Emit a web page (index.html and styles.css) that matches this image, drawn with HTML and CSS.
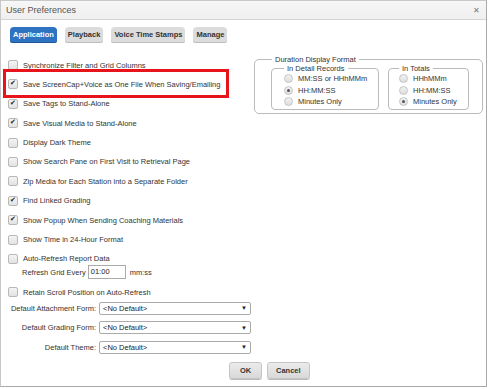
FILE: index.html
```html
<!DOCTYPE html>
<html lang="en">
<head>
    <meta charset="UTF-8" />
    <title>User Preferences</title>
    <link rel="stylesheet" href="styles.css">
</head>
<body>
<div class="dialog">
    <div class="titlebar">
        <span class="title">User Preferences</span>
        <span class="close">&#x2715;</span>
    </div>
    <div class="content">
        <div class="tabs">
            <span class="tab active">Application</span>
            <span class="tab">Playback</span>
            <span class="tab">Voice Time Stamps</span>
            <span class="tab">Manage</span>
        </div>

        <div class="columns">
            <div class="options">
                <div class="row"><span class="check"></span>Synchronize Filter and Grid Columns</div>
                <div class="row marked"><span class="check on"></span>Save ScreenCap+Voice as One File When Saving/Emailing</div>
                <div class="row"><span class="check on"></span>Save Tags to Stand-Alone</div>
                <div class="row"><span class="check on"></span>Save Visual Media to Stand-Alone</div>
                <div class="row"><span class="check"></span>Display Dark Theme</div>
                <div class="row"><span class="check"></span>Show Search Pane on First Visit to Retrieval Page</div>
                <div class="row"><span class="check"></span>Zip Media for Each Station into a Separate Folder</div>
                <div class="row"><span class="check on"></span>Find Linked Grading</div>
                <div class="row"><span class="check on"></span>Show Popup When Sending Coaching Materials</div>
                <div class="row"><span class="check"></span>Show Time in 24-Hour Format</div>
                <div class="row"><span class="check"></span>Auto-Refresh Report Data</div>
                <div class="row sub">Refresh Grid Every <span class="textbox">01:00</span> mm:ss</div>
                <div class="row"><span class="check"></span>Retain Scroll Position on Auto-Refresh</div>

                <div class="fields">
                    <div class="field"><label>Default Attachment Form:</label><span class="select">&lt;No Default&gt;<i>&#x25BC;</i></span></div>
                    <div class="field"><label>Default Grading Form:</label><span class="select">&lt;No Default&gt;<i>&#x25BC;</i></span></div>
                    <div class="field"><label>Default Theme:</label><span class="select">&lt;No Default&gt;<i>&#x25BC;</i></span></div>
                </div>
            </div>

            <fieldset class="group">
                <legend>Duration Display Format</legend>
                <fieldset class="subgroup detail">
                    <legend>In Detail Records</legend>
                    <div class="radio"><span class="dot"></span>MM:SS or HHhMMm</div>
                    <div class="radio"><span class="dot on"></span>HH:MM:SS</div>
                    <div class="radio"><span class="dot"></span>Minutes Only</div>
                </fieldset>
                <fieldset class="subgroup totals">
                    <legend>In Totals</legend>
                    <div class="radio"><span class="dot"></span>HHhMMm</div>
                    <div class="radio"><span class="dot"></span>HH:MM:SS</div>
                    <div class="radio"><span class="dot on"></span>Minutes Only</div>
                </fieldset>
            </fieldset>
        </div>

        <div class="buttons">
            <button class="btn ok">OK</button>
            <button class="btn">Cancel</button>
        </div>
    </div>
</div>
</body>
</html>
```

FILE: styles.css
```css
body {
    margin: 0;
    background: #fff;
    font-family: 'Liberation Sans', Arial, sans-serif;
    font-size: 7.5px;
    color: #333;
}
.dialog {
    width: 485px;
    height: 385px;
    border: 1px solid #a9a9a9;
    border-top-color: #c8c8c8;
    border-left-color: #c8c8c8;
    display: flex;
    flex-direction: column;
}
.titlebar {
    height: 18px;
    display: flex;
    align-items: center;
    justify-content: space-between;
    padding: 0 6px 0 5px;
    background: linear-gradient(#f7f7f7, #efefef);
    border-bottom: 1px solid #d4d4d4;
}
.title {
    font-size: 9px;
    color: #555;
}
.close {
    font-size: 8px;
    color: #777;
}
.content {
    flex: 1;
    padding: 7px 0 0 7px;
    display: flex;
    flex-direction: column;
}
.tabs {
    display: flex;
    gap: 8px;
    padding-left: 2px;
    margin-bottom: 17px;
}
.tab {
    height: 15px;
    line-height: 15px;
    padding: 0 3px;
    font-weight: 700;
    background: #dcdcdc;
    color: #333;
    border-radius: 4px 4px 2px 2px;
    box-shadow: 0 1px 0 #bdbdbd;
}
.tab.active {
    background: #2e72c2;
    color: #fff;
    box-shadow: 0 1px 0 #1f5796;
}
.columns {
    display: flex;
    align-items: flex-start;
}
.options {
    width: 246px;
    flex: none;
    display: flex;
    flex-direction: column;
}
.row {
    height: 12px;
    display: flex;
    align-items: center;
    margin-bottom: 7.4px;
    white-space: nowrap;
}
.row.marked {
    position: relative;
}
.row.marked::after {
    content: '';
    position: absolute;
    left: -5px;
    top: -9px;
    width: 220px;
    height: 23px;
    border: 3px solid #e8141c;
}
.row.sub {
    margin-top: -7px;
    margin-bottom: 7px;
    padding-left: 14px;
    height: 14px;
}
.check {
    width: 8px;
    height: 8px;
    border: 1px solid #b8b8b8;
    border-radius: 2px;
    background: linear-gradient(#f4f4f4, #e2e2e2);
    margin-right: 5px;
    position: relative;
    flex: none;
}
.check.on::after {
    content: '\2714';
    position: absolute;
    left: 1px;
    top: -1px;
    font-size: 7px;
    color: #222;
}
.textbox {
    display: inline-block;
    width: 34px;
    height: 12px;
    line-height: 12px;
    border: 1px solid #aaa;
    padding-left: 2px;
    margin: 0 4px 0 2px;
    color: #222;
}
.fields {
    margin: -4px 0 0 -7px;
}
.field {
    display: flex;
    align-items: center;
    height: 13px;
    margin-bottom: 6.5px;
}
.field label {
    width: 98px;
    text-align: right;
    padding-right: 3px;
    box-sizing: border-box;
    white-space: nowrap;
}
.select {
    width: 144px;
    height: 11px;
    border: 1px solid #aaa;
    border-radius: 2px;
    display: flex;
    align-items: center;
    justify-content: space-between;
    padding: 0 3px;
    color: #222;
}
.select i {
    font-style: normal;
    font-size: 6px;
    color: #222;
}
.group {
    margin: -4px 0 0 0;
    padding: 0 13px 3px 17px;
    border: 1px solid #bbb;
    border-radius: 5px;
    display: flex;
    gap: 10px;
    color: #333;
}
.group > legend {
    padding: 0 3px;
}
.subgroup {
    margin: 0 0 0 -1px;
    border: 1px solid #bbb;
    border-radius: 4px;
    padding: 0 0 1px 12px;
    color: #333;
}
.subgroup.detail { width: 94px; }
.subgroup.totals { width: 69px; padding-left: 10px; }
.subgroup > legend {
    padding: 0 3px;
}
.radio {
    height: 11.5px;
    display: flex;
    align-items: center;
}
.dot {
    width: 7px;
    height: 7px;
    border: 1px solid #c4c4c4;
    border-radius: 50%;
    background: linear-gradient(#f2f2f2, #dedede);
    margin-right: 5px;
    position: relative;
    flex: none;
}
.dot.on::after {
    content: '';
    position: absolute;
    left: 2px;
    top: 2px;
    width: 3px;
    height: 3px;
    border-radius: 50%;
    background: #555;
}
.buttons {
    display: flex;
    gap: 5px;
    margin: 2px 0 0 221px;
}
.btn {
    font-family: inherit;
    font-size: 7.5px;
    font-weight: 700;
    color: #333;
    height: 17px;
    padding: 0 8px;
    border: 1px solid #c4c4c4;
    border-radius: 3px;
    background: linear-gradient(#ececec, #d8d8d8);
    box-shadow: 0 1px 0 #bbb;
}
.btn.ok {
    width: 33px;
}
```
